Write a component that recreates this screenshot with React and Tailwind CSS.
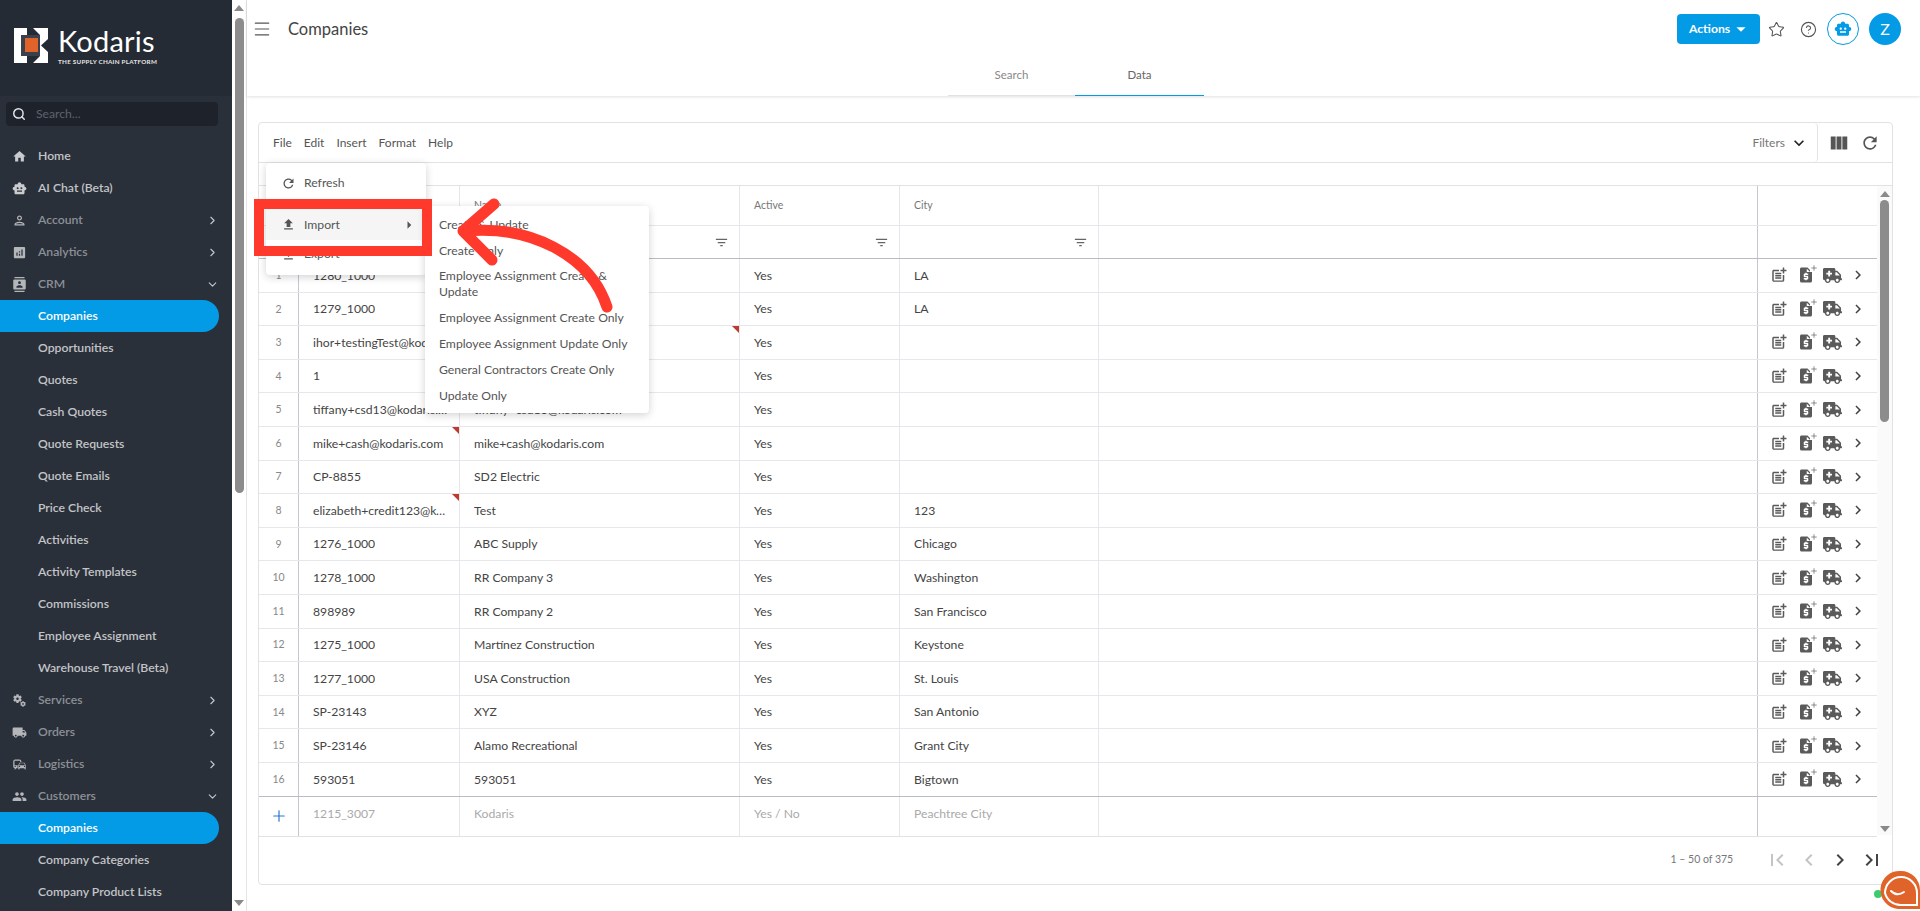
import { ChevronRight, ChevronDown, Menu, Star, CircleHelp, Search, Plus } from 'lucide-react'
import {
  MdHome, MdSmartToy, MdOutlinePerson, MdAnalytics, MdContacts, MdMiscellaneousServices,
  MdLocalShipping, MdCommute, MdPeople, MdFilterList, MdPostAdd, MdRequestQuote,
  MdViewColumn, MdRefresh, MdFileUpload, MdFileDownload, MdArrowRight, MdArrowDropDown,
  MdFirstPage, MdLastPage, MdChevronLeft, MdChevronRight, MdExpandMore,
} from 'react-icons/md'
import { FaAmbulance } from 'react-icons/fa'

const nav = [
  { label: 'Home', icon: MdHome, bright: true },
  { label: 'AI Chat (Beta)', icon: MdSmartToy, bright: true },
  { label: 'Account', icon: MdOutlinePerson, arrow: 'right' },
  { label: 'Analytics', icon: MdAnalytics, arrow: 'right' },
  { label: 'CRM', icon: MdContacts, arrow: 'down' },
  { label: 'Companies', active: true },
  { label: 'Opportunities' },
  { label: 'Quotes' },
  { label: 'Cash Quotes' },
  { label: 'Quote Requests' },
  { label: 'Quote Emails' },
  { label: 'Price Check' },
  { label: 'Activities' },
  { label: 'Activity Templates' },
  { label: 'Commissions' },
  { label: 'Employee Assignment' },
  { label: 'Warehouse Travel (Beta)' },
  { label: 'Services', icon: MdMiscellaneousServices, arrow: 'right' },
  { label: 'Orders', icon: MdLocalShipping, arrow: 'right' },
  { label: 'Logistics', icon: MdCommute, arrow: 'right' },
  { label: 'Customers', icon: MdPeople, arrow: 'down' },
  { label: 'Companies', active: true },
  { label: 'Company Categories' },
  { label: 'Company Product Lists' },
]

const rows = [
  ['1280_1000', 'Test Company', 'LA'],
  ['1279_1000', 'Test Company', 'LA'],
  ['ihor+testingTest@kodaris.com', 'ihor+testingTest@kodaris.com', '', true, true],
  ['1', '1', ''],
  ['tiffany+csd13@kodaris.com', 'tiffany+csd13@kodaris.com', ''],
  ['mike+cash@kodaris.com', 'mike+cash@kodaris.com', '', true],
  ['CP-8855', 'SD2 Electric', ''],
  ['elizabeth+credit123@kodaris.com', 'Test', '123', true],
  ['1276_1000', 'ABC Supply', 'Chicago'],
  ['1278_1000', 'RR Company 3', 'Washington'],
  ['898989', 'RR Company 2', 'San Francisco'],
  ['1275_1000', 'Martínez Construction', 'Keystone'],
  ['1277_1000', 'USA Construction', 'St. Louis'],
  ['SP-23143', 'XYZ', 'San Antonio'],
  ['SP-23146', 'Alamo Recreational', 'Grant City'],
  ['593051', '593051', 'Bigtown'],
]

const cols = 'grid grid-cols-[40px_161px_280px_160px_199px_659px_119px]'
const imports = ['Create & Update', 'Create Only', 'Employee Assignment Create & Update', 'Employee Assignment Create Only', 'Employee Assignment Update Only', 'General Contractors Create Only', 'Update Only']

function Logo() {
  return (
    <svg width="35" height="35" viewBox="0 0 35 35" className="shrink-0">
      <path d="M0 0H13V7H7V28H13V35H0Z M19 0H34V11L27 17.5L34 24V35H19L26 28V7Z" fill="#fff" />
      <rect x="7" y="7" width="19" height="21" fill="#3a414c" />
      <rect x="11" y="10" width="13" height="14" fill="#e0632a" />
    </svg>
  )
}

function Sidebar() {
  return (
    <aside className="w-[232px] h-[911px] shrink-0 bg-[#2a303a] overflow-hidden">
      <div className="h-[96px] bg-[#252b34] flex items-start pt-[28px] pl-[14px] gap-[9px]">
        <Logo />
        <div className="text-white -mt-[4px]">
          <div className="text-[29px] leading-[34px] font-normal tracking-[0.2px]">Kodaris</div>
          <div className="text-[6.3px] leading-[7px] font-bold text-[#e4e4e4] tracking-[0.25px] whitespace-nowrap">THE SUPPLY CHAIN PLATFORM</div>
        </div>
      </div>
      <div className="ml-[6px] mt-[6px] w-[212px] h-[24px] rounded bg-[#1e232b] flex items-center pl-[6px] gap-[10px]">
        <Search size={14} strokeWidth={2.5} className="text-[#dfe6ee]" />
        <span className="text-[12.2px] text-[#5d636c]">Search...</span>
      </div>
      <nav className="mt-[14px]">
        {nav.map((item, i) => {
          const Icon = item.icon
          return (
            <div
              key={i}
              className={`h-[32px] w-[219px] flex items-center text-[12.2px] font-semibold ${item.active ? 'bg-[#039be5] text-white rounded-r-full font-bold' : item.icon && !item.bright ? 'text-[#8c9097]' : 'text-[#c2c4c7]'}`}
            >
              <span className="w-[38px] pl-[12px] shrink-0">
                {Icon && <Icon size={15} className={item.bright ? 'text-[#c9cbce]' : 'text-[#b4b6ba]'} />}
              </span>
              <span className="flex-1 whitespace-nowrap pt-[1px]">{item.label}</span>
              {item.arrow === 'right' && <ChevronRight size={13} strokeWidth={2} className="text-[#c4c8cd]" />}
              {item.arrow === 'down' && <ChevronDown size={13} strokeWidth={2} className="text-[#c4c8cd]" />}
            </div>
          )
        })}
      </nav>
    </aside>
  )
}

function PageScrollbar() {
  return (
    <div className="w-[15px] h-[911px] shrink-0 bg-white flex flex-col items-center border-r border-[#e5e5e5]">
      <div className="mt-[5px] w-0 h-0 border-x-[5px] border-x-transparent border-b-[6px] border-b-[#8a8a8a]" />
      <div className="mt-[7px] w-[9px] h-[475px] rounded-full bg-[#8c8c8c]" />
      <div className="mt-auto mb-[5px] w-0 h-0 border-x-[5px] border-x-transparent border-t-[6px] border-t-[#8a8a8a]" />
    </div>
  )
}

function RowActions() {
  return (
    <div className="flex items-center pl-[12px] text-[#5a5a5a]">
      <MdPostAdd size={18} />
      <span className="relative ml-[8.5px]">
        <MdRequestQuote size={18} />
        <Plus size={8} strokeWidth={2} className="absolute -top-[2px] -right-[3px] bg-white" />
      </span>
      <FaAmbulance size={19} className="ml-[8.5px]" />
      <MdChevronRight size={18} className="text-[#444] ml-[7px]" />
    </div>
  )
}

function Table() {
  return (
    <section className="relative ml-[11px] mr-[27px] mt-[26px] h-[763px] border border-[#e2e2e2] rounded flex flex-col">
      {/* toolbar */}
      <div className="h-[40px] shrink-0 flex items-center border-b border-[#e2e2e2] text-[12px] text-[#555]">
        <div className="flex gap-[12px] pl-[14px] pt-[1px]">
          <span>File</span><span>Edit</span><span>Insert</span><span>Format</span><span>Help</span>
        </div>
        <div className="ml-auto flex items-center h-full border-r border-[#e2e2e2] rounded-r pr-[8px]">
          <span className="text-[#777] pt-[1px]">Filters</span>
          <MdExpandMore size={20} className="ml-[4px] text-[#222]" />
        </div>
        <div className="flex items-center gap-[10px] pl-[10px] pr-[12px] text-[#555]">
          <MdViewColumn size={22} />
          <MdRefresh size={20} />
        </div>
      </div>
      <div className="h-[23px] shrink-0 border-b border-[#e2e2e2]" />
      {/* grid */}
      <div className="flex flex-1 min-h-0">
        <div className="w-[1618px] shrink-0 text-[12.2px] text-[#444]">
          <div className={`${cols} h-[40px] border-b border-[#e6e7ea] text-[10.5px] text-[#777]`}>
            <div className="border-r border-[#c5c8d0]" />
            <div className="border-r border-[#e6e7ea] flex items-center pl-[14px]">Code</div>
            <div className="border-r border-[#e6e7ea] flex items-center pl-[14px]">Name</div>
            <div className="border-r border-[#e6e7ea] flex items-center pl-[14px]">Active</div>
            <div className="border-r border-[#e6e7ea] flex items-center pl-[14px]">City</div>
            <div className="border-r border-[#c5c8d0]" />
            <div />
          </div>
          <div className={`${cols} h-[33px] border-b border-[#b9bcc6] text-[#666]`}>
            <div className="border-r border-[#c5c8d0]" />
            {[0, 1, 2, 3].map((k) => (
              <div key={k} className="border-r border-[#e6e7ea] flex items-center justify-end pr-[10px]"><MdFilterList size={15} /></div>
            ))}
            <div className="border-r border-[#c5c8d0]" />
            <div />
          </div>
          {rows.map((r, i) => (
            <div key={i} className={`${cols} h-[33.6px] border-b ${i === 15 ? 'border-[#b9bcc6]' : 'border-[#e6e7ea]'}`}>
              <div className="border-r border-[#c5c8d0] flex items-center justify-center text-[10.5px] text-[#888] pt-[1px]">{i + 1}</div>
              <div className="relative border-r border-[#e6e7ea] flex items-center pl-[14px] pr-[10px] pt-[1px] min-w-0">
                <span className="truncate">{r[0]}</span>
                {r[3] && !r[4] && <span className="absolute top-0 right-0 w-0 h-0 border-l-[7px] border-l-transparent border-t-[7px] border-t-[#c0392f]" />}
              </div>
              <div className="relative border-r border-[#e6e7ea] flex items-center pl-[14px] pt-[1px] min-w-0">
                <span className="truncate">{r[1]}</span>
                {r[4] && <span className="absolute top-0 right-0 w-0 h-0 border-l-[7px] border-l-transparent border-t-[7px] border-t-[#c0392f]" />}
              </div>
              <div className="border-r border-[#e6e7ea] flex items-center pl-[14px] pt-[1px]">Yes</div>
              <div className="border-r border-[#e6e7ea] flex items-center pl-[14px] pt-[1px]">{r[2]}</div>
              <div className="border-r border-[#c5c8d0]" />
              <RowActions />
            </div>
          ))}
          <div className={`${cols} h-[40px] border-b border-[#e2e2e2] text-[#aaa]`}>
            <div className="border-r border-[#c5c8d0] flex items-center justify-center"><Plus size={18} strokeWidth={1.6} className="text-[#2f74d0]" /></div>
            <div className="border-r border-[#e6e7ea] flex items-center pl-[14px] pb-[3px]">1215_3007</div>
            <div className="border-r border-[#e6e7ea] flex items-center pl-[14px] pb-[3px]">Kodaris</div>
            <div className="border-r border-[#e6e7ea] flex items-center pl-[14px] pb-[3px]">Yes / No</div>
            <div className="border-r border-[#e6e7ea] flex items-center pl-[14px] pb-[3px]">Peachtree City</div>
            <div className="border-r border-[#c5c8d0]" />
            <div />
          </div>
        </div>
        {/* inner scrollbar */}
        <div className="w-[15px] h-[649px] shrink-0 bg-[#fafafa] flex flex-col items-center">
          <div className="mt-[5px] w-0 h-0 border-x-[5px] border-x-transparent border-b-[6px] border-b-[#8a8a8a]" />
          <div className="mt-[3px] w-[9px] h-[222px] rounded-full bg-[#8c8c8c]" />
          <div className="mt-auto mb-[3px] w-0 h-0 border-x-[5px] border-x-transparent border-t-[6px] border-t-[#8a8a8a]" />
        </div>
      </div>
      {/* pagination */}
      <div className="h-[49px] shrink-0 flex items-center justify-end text-[10.5px] text-[#777] pr-[8px]">
        <span className="mr-[32px]">1 – 50 of 375</span>
        <div className="flex items-center gap-[7.6px]">
          <MdFirstPage size={24} className="text-[#c4c4c4]" />
          <MdChevronLeft size={24} className="text-[#c4c4c4]" />
          <MdChevronRight size={24} className="text-[#444]" />
          <MdLastPage size={24} className="text-[#444]" />
        </div>
      </div>
    </section>
  )
}

function FileMenu() {
  const item = 'flex items-center gap-[8px] pl-[15px] text-[12.2px] text-[#555]'
  return (
    <>
      <div className="absolute left-[266px] top-[163px] w-[160px] h-[112px] bg-white rounded shadow-[0_2px_8px_rgba(0,0,0,0.18)] pt-[4px]">
        <div className={`${item} h-[33px]`}><MdRefresh size={15} />Refresh</div>
        <div className={`${item} mt-[9px] h-[31px] bg-[#f5f5f5]`}><MdFileUpload size={15} /><span className="pt-[2px]">Import</span><MdArrowRight size={18} className="ml-auto mr-[8px]" /></div>
        <div className={`${item} h-[29px]`}><MdFileDownload size={15} />Export</div>
      </div>
      <div className="absolute left-[425px] top-[206px] w-[224px] h-[207px] bg-white rounded shadow-[0_2px_8px_rgba(0,0,0,0.18)] pt-[6px] text-[12.2px] leading-[16px] text-[#555]">
        {imports.map((t) => (
          <div key={t} className="px-[14px] py-[4.9px]">{t}</div>
        ))}
      </div>
      {/* red callout drawn over the page */}
      <div className="absolute left-[254px] top-[199px] w-[178px] h-[57px] border-[10px] border-[#ff392b]" />
      <svg className="absolute left-[440px] top-[190px]" width="190" height="130" viewBox="0 0 190 130" fill="none" stroke="#ff392b" strokeWidth="11" strokeLinecap="round" strokeLinejoin="round">
        <path d="M54 14 L23 41 L52 70" />
        <path d="M25 41 C90 35 150 65 167 117" />
      </svg>
    </>
  )
}

function ChatBubble() {
  return (
    <div className="absolute right-0 bottom-0 w-[46px] h-[42px] overflow-hidden">
      <svg width="46" height="42" viewBox="0 0 46 42">
        <circle cx="4" cy="25" r="4" fill="#3ecb70" />
        <path d="M27 2 a19 19 0 0 1 19 19 V40 H24 A19 19 0 0 1 27 2z" fill="#e0632a" />
        <path d="M11 24 a16 16 0 0 1 32 0 V36 H27 A16 16 0 0 1 11 24z" fill="#e0632a" stroke="#fff" strokeWidth="2" />
        <path d="M17 22 q6 6 13 1" stroke="#fff" strokeWidth="2" fill="none" strokeLinecap="round" />
      </svg>
    </div>
  )
}

export default function App() {
  return (
    <div className="relative flex w-[1920px] h-[911px] overflow-hidden bg-white font-['Lato',sans-serif]">
      <Sidebar />
      <PageScrollbar />
      <main className="flex-1 min-w-0">
        <header className="h-[96px] shadow-[0_1px_3px_rgba(0,0,0,0.12)] flex flex-col">
          <div className="h-[58px] flex items-center pl-[5px] pr-[19px]">
            <Menu size={20} strokeWidth={1.4} className="text-[#555]" />
            <h1 className="ml-[16px] text-[16.5px] text-[#444] font-normal">Companies</h1>
            <button className="ml-auto w-[83px] h-[30px] rounded bg-[#039be5] text-white text-[12.2px] font-bold flex items-center justify-center">
              Actions<MdArrowDropDown size={22} className="-mr-[4px]" />
            </button>
            <Star size={17} strokeWidth={1.5} className="ml-[7.5px] text-[#555]" />
            <CircleHelp size={17} strokeWidth={1.6} className="ml-[15px] text-[#555]" />
            <span className="ml-[10.5px] w-[32px] h-[32px] rounded-full border border-[#039be5] flex items-center justify-center text-[#039be5]"><MdSmartToy size={18} /></span>
            <span className="ml-[10px] w-[32px] h-[32px] rounded-full bg-[#039be5] flex items-center justify-center text-white text-[16px]">Z</span>
          </div>
          <div className="h-[38px] flex justify-center text-[11.5px] pr-[15px]">
            <div className="w-[127px] flex items-center justify-center text-[#888] border-b border-[#e2e2e2] pb-[3px]">Search</div>
            <div className="w-[129px] flex items-center justify-center text-[#666] border-b border-[#039be5] pb-[3px]">Data</div>
          </div>
        </header>
        <Table />
      </main>
      <FileMenu />
      <ChatBubble />
    </div>
  )
}
